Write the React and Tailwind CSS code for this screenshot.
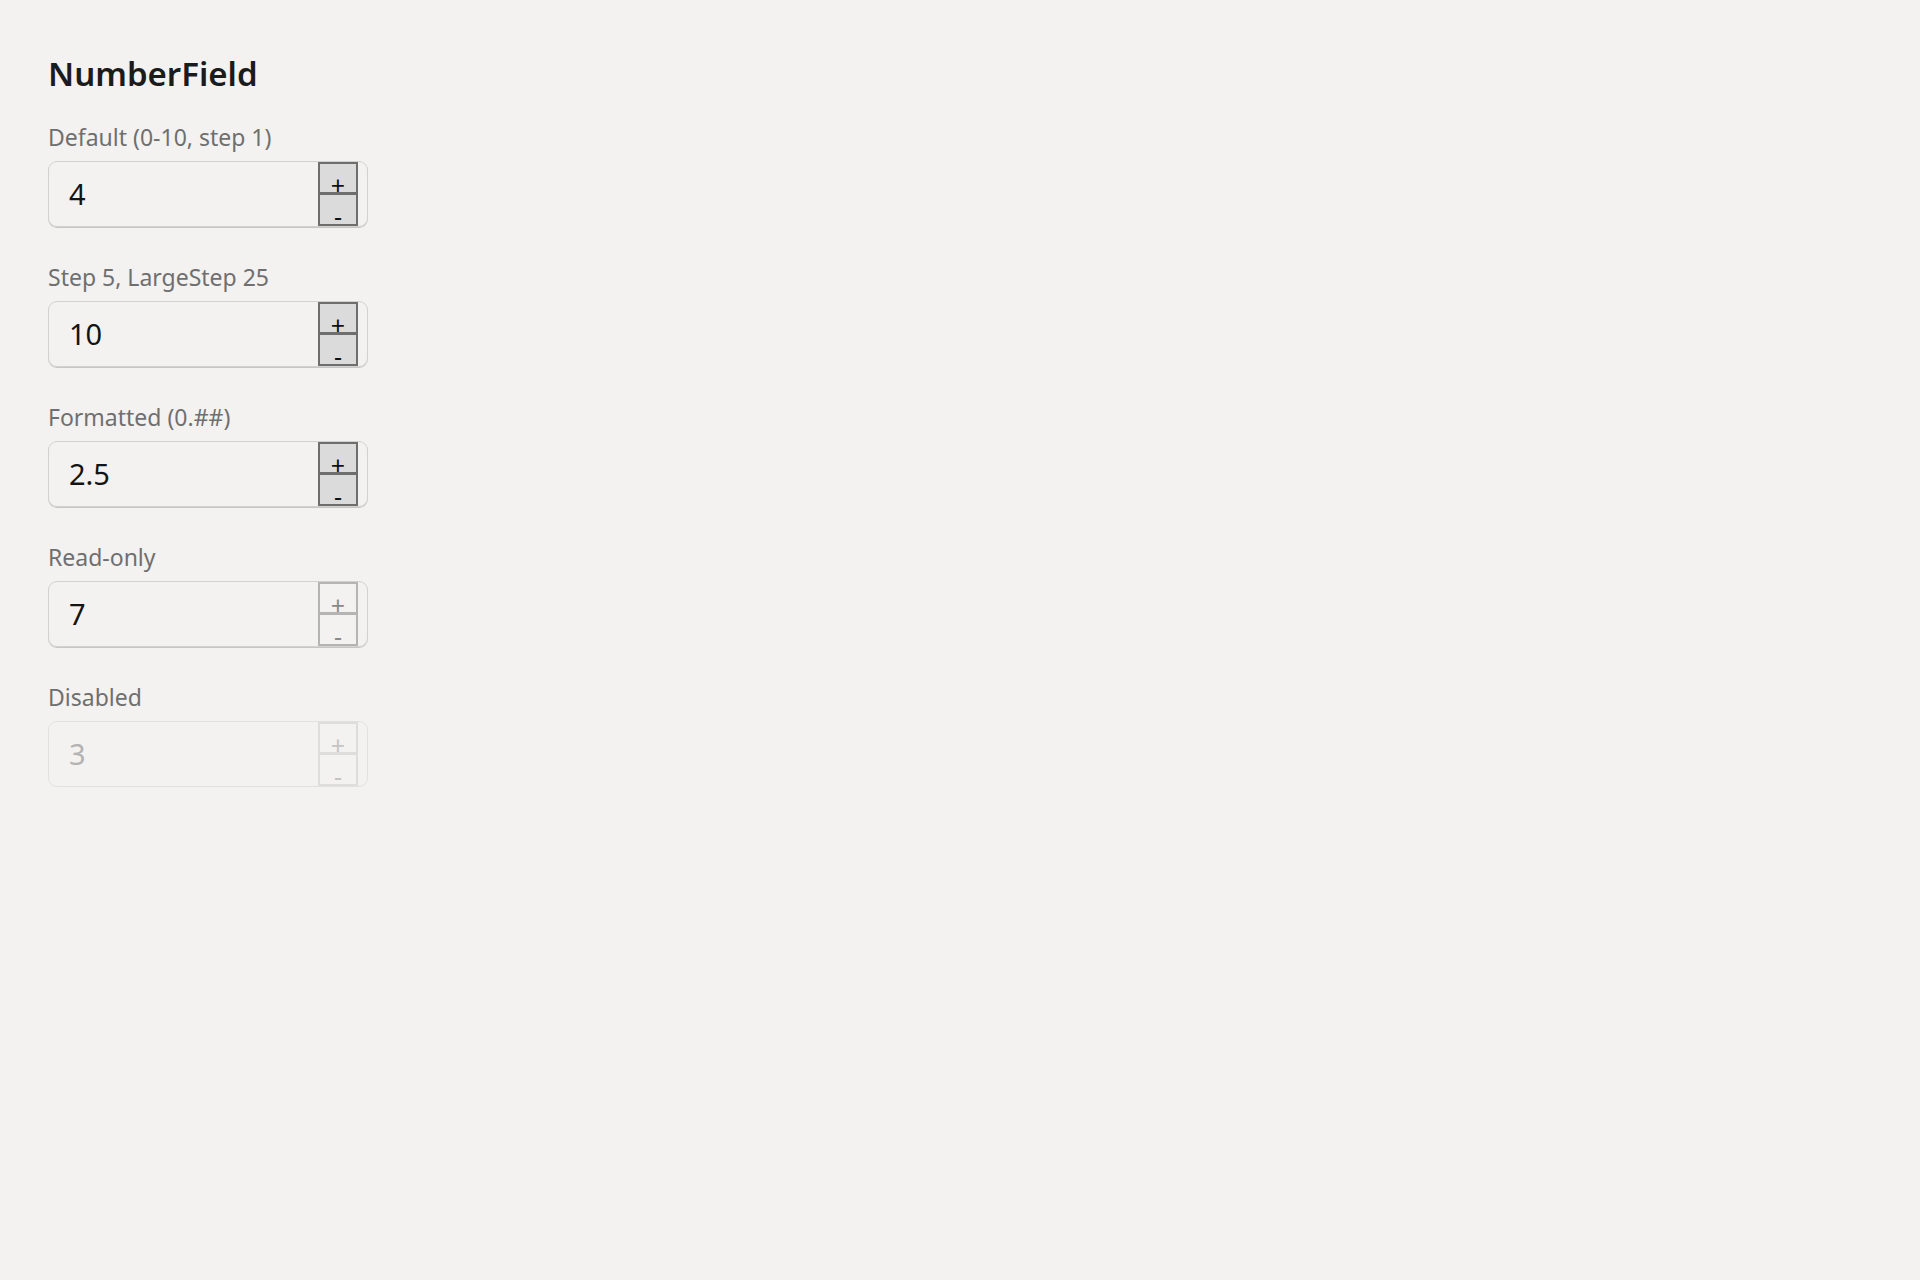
import React from "react";

const fields = [
  { label: "Default (0-10, step 1)", value: "4", state: "normal" },
  { label: "Step 5, LargeStep 25", value: "10", state: "normal" },
  { label: "Formatted (0.##)", value: "2.5", state: "normal" },
  { label: "Read-only", value: "7", state: "readonly" },
  { label: "Disabled", value: "3", state: "disabled" },
];

function Spinner({ state }) {
  const styles = {
    normal: "border-[#6e6e6e] bg-[#dbdbdb] text-[#111111]",
    readonly: "border-[#b4b4b4] bg-[#f3f2f1] text-[#8a8a8a]",
    disabled: "border-[#dedddc] bg-[#f3f2f1] text-[#c4c4c4]",
  }[state];
  return (
    <div className="flex h-full w-[40px] flex-col">
      <button
        type="button"
        className={`flex h-[32px] items-end justify-center border-2 text-[25px] leading-[19px] ${styles}`}
      >
        <span className="translate-y-[3px]">+</span>
      </button>
      <button
        type="button"
        className={`flex h-[32px] items-end justify-center border-2 border-t-[1px] text-[25px] leading-[19px] ${styles}`}
      >
        <span className="translate-y-[2px]">-</span>
      </button>
    </div>
  );
}

function NumberField({ label, value, state }) {
  const disabled = state === "disabled";
  return (
    <div className="flex flex-col">
      <span className="text-[23px] leading-[29px] text-[#6f6f6f]">{label}</span>
      <div
        className={`mt-[9px] flex h-[66px] w-[320px] items-stretch rounded-[9px] border pr-[9px] ${
          disabled ? "border-[#e2e1e0]" : "border-[#d2d1d0] shadow-[0_1px_0_#c8c7c6]"
        }`}
      >
        <input
          readOnly
          value={value}
          disabled={disabled}
          className={`min-w-0 flex-1 bg-transparent pl-[20px] text-[29px] outline-none ${
            disabled ? "text-[#b3b3b3]" : "text-[#141414]"
          }`}
        />
        <Spinner state={state} />
      </div>
    </div>
  );
}

export default function App() {
  return (
    <div
      className="min-h-screen bg-[#f3f2f1] pl-[48px] pt-[48px]"
      style={{ fontFamily: '"Noto Sans", "Open Sans", sans-serif' }}
    >
      <h1 className="text-[33px] font-semibold leading-[52px] text-[#1b1b1b]">NumberField</h1>
      <div className="mt-[23px] flex flex-col gap-[36px]">
        {fields.map((f) => (
          <NumberField key={f.label} {...f} />
        ))}
      </div>
    </div>
  );
}
